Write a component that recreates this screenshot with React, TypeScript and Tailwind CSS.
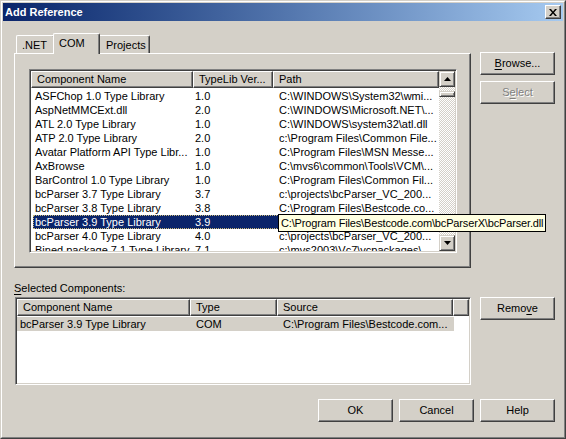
import React from "react";

const raised =
  "border border-t-white border-l-white border-r-[#404040] border-b-[#404040] shadow-[inset_-1px_-1px_#808080] bg-[#d4d0c8]";
const sunken =
  "border border-t-[#808080] border-l-[#808080] border-r-white border-b-white shadow-[inset_1px_1px_#404040,inset_-1px_-1px_#d4d0c8] bg-white p-[1px]";
const headerCell =
  "h-[17px] shrink-0 border border-t-white border-l-white border-r-[#404040] border-b-[#404040] shadow-[inset_-1px_-1px_#808080] bg-[#d4d0c8] pl-[5px] leading-[15px] whitespace-nowrap overflow-hidden";

const components: [string, string, string][] = [
  ["ASFChop 1.0 Type Library", "1.0", "C:\\WINDOWS\\System32\\wmi..."],
  ["AspNetMMCExt.dll", "2.0", "C:\\WINDOWS\\Microsoft.NET\\..."],
  ["ATL 2.0 Type Library", "1.0", "C:\\WINDOWS\\system32\\atl.dll"],
  ["ATP 2.0 Type Library", "2.0", "c:\\Program Files\\Common File..."],
  ["Avatar Platform API Type Libr...", "1.0", "C:\\Program Files\\MSN Messe..."],
  ["AxBrowse", "1.0", "C:\\mvs6\\common\\Tools\\VCM\\..."],
  ["BarControl 1.0 Type Library", "1.0", "C:\\Program Files\\Common Fil..."],
  ["bcParser 3.7 Type Library", "3.7", "c:\\projects\\bcParser_VC_200..."],
  ["bcParser 3.8 Type Library", "3.8", "C:\\Program Files\\Bestcode.co..."],
  ["bcParser 3.9 Type Library", "3.9", "C:\\Program Files\\Bestcode.com..."],
  ["bcParser 4.0 Type Library", "4.0", "c:\\projects\\bcParser_VC_200..."],
  ["Bined package 7.1 Type Library", "7.1", "c:\\mvs2003\\Vc7\\vcpackages\\..."],
];

// the path of this row sits under the tooltip
const selectedIndex = 9;

function Arrow({ up }: { up?: boolean }) {
  return (
    <svg width="7" height="4" viewBox="0 0 7 4">
      {up ? <polygon points="3.5,0 7,4 0,4" fill="#000" /> : <polygon points="0,0 7,0 3.5,4" fill="#000" />}
    </svg>
  );
}

function ScrollButton({ up }: { up?: boolean }) {
  return (
    <div className="h-[16px] w-[16px] shrink-0 flex items-center justify-center border border-t-[#d4d0c8] border-l-[#d4d0c8] border-r-[#404040] border-b-[#404040] shadow-[inset_1px_1px_#fff,inset_-1px_-1px_#808080] bg-[#d4d0c8]">
      <Arrow up={up} />
    </div>
  );
}

function Button({ children, disabled }: { children: React.ReactNode; disabled?: boolean }) {
  return (
    <div
      className={
        raised +
        " w-[75px] h-[23px] shrink-0 flex items-center justify-center " +
        (disabled ? "text-[#808080] [text-shadow:1px_1px_0_#fff]" : "text-black")
      }
    >
      {children}
    </div>
  );
}

function U({ children }: { children: React.ReactNode }) {
  return <span className="underline underline-offset-[2px]">{children}</span>;
}

export default function App() {
  return (
    <div className="relative w-[566px] h-[439px] bg-[#d4d0c8] border border-t-[#d4d0c8] border-l-[#d4d0c8] border-r-[#404040] border-b-[#404040] font-['Liberation_Sans',Arial,sans-serif] text-[11px] text-black select-none">
      <div className="h-full border border-t-white border-l-white border-r-[#808080] border-b-[#808080] p-[1px] flex flex-col">
        {/* title bar */}
        <div className="h-[18px] shrink-0 flex items-center justify-between bg-linear-to-r from-[#0a246a] to-[#a6caf0] pl-[2px] pr-[2px]">
          <span className="font-bold text-white text-[11px] leading-[18px]">Add Reference</span>
          <div className="w-[16px] h-[14px] flex items-center justify-center border border-t-white border-l-white border-r-[#404040] border-b-[#404040] shadow-[inset_-1px_-1px_#808080] bg-[#d4d0c8]">
            <svg width="8" height="7" viewBox="0 0 8 7">
              <path d="M0 0h2l2 2.5L6 0h2L5 3.5 8 7H6L4 4.5 2 7H0l3-3.5z" fill="#000" />
            </svg>
          </div>
        </div>

        {/* upper part */}
        <div className="flex mt-[12px]">
          <div className="ml-[11px] w-[457px]">
            <div className="h-[20px] flex items-start pl-[2px]">
              <div className="mt-[2px] h-[18px] w-[39px] border border-t-white border-l-white border-r-[#404040] border-b-0 shadow-[inset_-1px_0_#808080] rounded-t-[2px] pl-[5px] pt-[2px] leading-[14px]">
                .NET
              </div>
              <div className="relative z-10 -mx-[2px] h-[21px] w-[47px] border border-t-white border-l-white border-r-[#404040] border-b-0 shadow-[inset_-1px_0_#808080] rounded-t-[2px] bg-[#d4d0c8] pl-[5px] pt-[2px] leading-[14px]">
                COM
              </div>
              <div className="mt-[2px] h-[18px] w-[52px] border border-t-white border-l-white border-r-[#404040] border-b-0 shadow-[inset_-1px_0_#808080] rounded-t-[2px] pl-[7px] pt-[2px] leading-[14px]">
                Projects
              </div>
            </div>
            <div className="h-[215px] border border-t-white border-l-white border-r-[#404040] border-b-[#404040] shadow-[inset_-1px_-1px_#808080] pl-[14px] pt-[15px]">
              <div className={sunken + " w-[428px] h-[184px]"}>
                <div className="flex h-full">
                  <div className="w-[408px] overflow-hidden">
                    <div className="flex">
                      <div className={headerCell + " w-[162px]"}>Component Name</div>
                      <div className={headerCell + " w-[80px]"}>TypeLib Ver...</div>
                      <div className={headerCell + " w-[166px]"}>Path</div>
                    </div>
                    <div className="pt-[1px]">
                      {components.map((r, i) => {
                        const sel = i === selectedIndex;
                        return (
                          <div
                            key={r[0]}
                            className={
                              "ml-[2px] flex h-[14px] leading-[14px] whitespace-nowrap " +
                              (sel
                                ? "bg-[#0a246a] text-white outline-1 outline-dotted outline-[#c8b878] -outline-offset-1"
                                : "")
                            }
                          >
                            <div className="w-[160px] pl-[2px] overflow-hidden">{r[0]}</div>
                            <div className="w-[80px] pl-[2px] overflow-hidden">{r[1]}</div>
                            <div className={"w-[164px] pl-[6px] overflow-hidden " + (sel ? "invisible" : "")}>
                              {r[2]}
                            </div>
                          </div>
                        );
                      })}
                    </div>
                  </div>
                  <div className="w-[16px] flex flex-col">
                    <ScrollButton up />
                    <div className="flex-1 [background-image:repeating-conic-gradient(#d4d0c8_0_25%,#ffffff_0_50%)] [background-size:2px_2px]">
                      <div className="mt-[4px] h-[6px] border border-t-[#d4d0c8] border-l-[#d4d0c8] border-r-[#404040] border-b-[#404040] shadow-[inset_1px_1px_#fff,inset_-1px_-1px_#808080] bg-[#d4d0c8]" />
                    </div>
                    <ScrollButton />
                  </div>
                </div>
              </div>
            </div>
          </div>
          <div className="ml-[9px] mt-[19px] flex flex-col gap-[6px]">
            <Button>
              <span>
                <U>B</U>rowse...
              </span>
            </Button>
            <Button disabled>
              <span>
                S<U>e</U>lect
              </span>
            </Button>
          </div>
        </div>

        {/* selected components */}
        <div className="ml-[11px] mt-[14px] h-[13px] leading-[13px]">
          <U>S</U>elected Components:
        </div>
        <div className="flex mt-[2px]">
          <div className={sunken + " ml-[12px] w-[456px] h-[88px]"}>
            <div className="flex">
              <div className={headerCell + " w-[173px]"}>Component Name</div>
              <div className={headerCell + " w-[87px]"}>Type</div>
              <div className={headerCell + " w-[176px]"}>Source</div>
              <div className={headerCell + " w-[16px]"} />
            </div>
            <div className="mt-[1px] flex w-[437px] h-[14px] leading-[14px] bg-[#d4d0c8] whitespace-nowrap">
              <div className="w-[173px] pl-[3px] overflow-hidden">bcParser 3.9 Type Library</div>
              <div className="w-[87px] pl-[6px] overflow-hidden">COM</div>
              <div className="w-[177px] pl-[6px] overflow-hidden">C:\Program Files\Bestcode.com...</div>
            </div>
          </div>
          <div className="ml-[9px]">
            <Button>
              <span>
                Remo<U>v</U>e
              </span>
            </Button>
          </div>
        </div>

        {/* bottom buttons */}
        <div className="flex justify-end gap-[6px] pr-[8px] mt-[14px]">
          <Button>OK</Button>
          <Button>Cancel</Button>
          <Button>Help</Button>
        </div>
      </div>

      {/* tooltip over the selected path */}
      <div className="absolute left-[277px] top-[213px] w-[268px] h-[18px] border border-black bg-[#ffffe1] pl-[2px] leading-[16px] tracking-[-0.15px] whitespace-nowrap overflow-hidden z-20">
        C:\Program Files\Bestcode.com\bcParserX\bcParser.dll
      </div>
    </div>
  );
}
